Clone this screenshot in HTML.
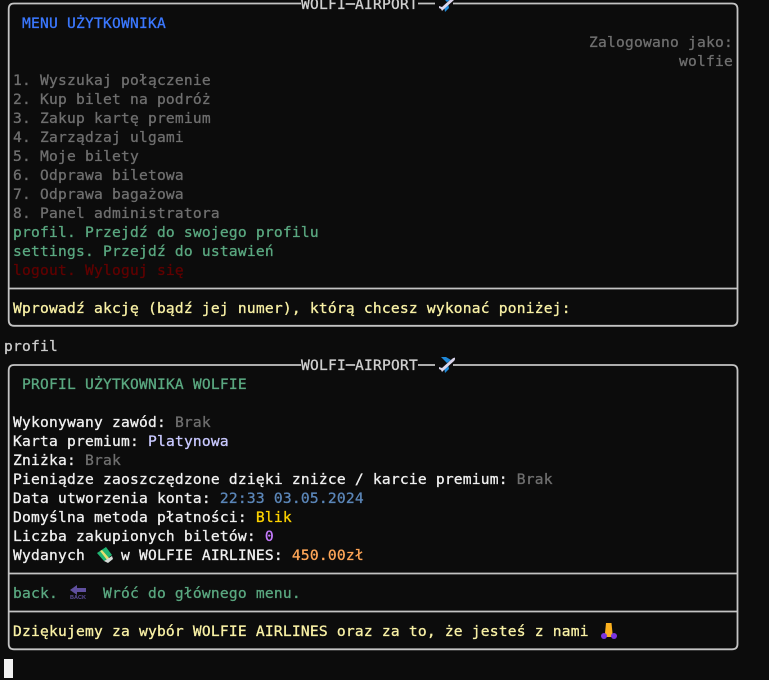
<!DOCTYPE html>
<html lang="pl"><head><meta charset="utf-8"><title>Wolfi Airport</title>
<style>
html,body{margin:0;padding:0;background:#0c0c0c;width:769px;height:680px;overflow:hidden}
.r{position:absolute;left:4px;height:19px;line-height:19px;margin-top:1px;white-space:pre;font-family:"DejaVu Sans Mono","Liberation Mono",monospace;font-size:14.6px;letter-spacing:.21px;color:#f0f0f0;-webkit-text-stroke:.3px currentColor}
.gr{color:#6f6f6f}.g{color:#5aa880}.y{color:#f9f1a5}.rd{color:#600000}.b{color:#3b78ff}
.t{color:#d0d0d0}
svg{position:absolute;left:0;top:0}
#cur{position:absolute;left:4px;top:659px;width:9px;height:19px;background:#f2f2f2}
</style></head><body>
<svg width="769" height="680" viewBox="0 0 769 680" fill="none" stroke="#c4c4c4" stroke-width="1.8">
<path d="M301 3.500H14Q8.700 3.500 8.700 9V320Q8.700 325.800 14 325.800H732Q737.500 325.800 737.500 320V9Q737.500 3.500 732 3.500H453M418 3.500H435"/>
<path d="M9 288.500H737"/>
<path d="M301 365H14Q8.700 365 8.700 370.500V644Q8.700 649.300 14 649.300H732Q737.500 649.300 737.500 644V370.500Q737.500 365 732 365H453M418 365H435"/>
<path d="M9 573.500H737M9 611.500H737"/>
<g stroke="none">
<path fill="#1e88d8" d="M441 357h5l5 3-4 3zM444 367l4-3 1 5-4 4z"/>
<path fill="#dcd6ec" d="M439 367l3 1 10-9c1-1 3-2 3-1s0 2-1 3l-10 9-2 2-1-2-2-1z"/>
</g>
<g stroke="none" transform="translate(0 -361)">
<path fill="#1e88d8" d="M441 357h5l5 3-4 3zM444 367l4-3 1 5-4 4z"/>
<path fill="#dcd6ec" d="M439 367l3 1 10-9c1-1 3-2 3-1s0 2-1 3l-10 9-2 2-1-2-2-1z"/>
</g>
<g stroke="none">
<path fill="#21b573" d="M97 553l9-6 6 8-8 6z"/>
<path fill="#e8e070" d="M100 551l2-1 7 8-2 2z"/>
<path fill="#d5dcd8" d="M104 561l8-5 1 3-5 4z"/>
<path fill="#5f4f9e" d="M70 590l7-5v3h9v4h-9v3z"/>
<path fill="#fbb01e" d="M606 623h5.500l1 10-1 4h-5.500l-1-4z"/>
<circle cx="604" cy="636" r="3" fill="#7a35e0"/>
<circle cx="614" cy="636" r="3" fill="#7a35e0"/>
</g>
</svg>
<div class="r t" style="left:301px;top:355px">WOLFI─AIRPORT</div>
<div class="r t" style="left:301px;top:-6px">WOLFI─AIRPORT</div>
<div class="r b" style="left:22px;top:13px">MENU UŻYTKOWNIKA</div>
<div class="r gr" style="left:589px;top:32px">Zalogowano jako:</div>
<div class="r gr" style="left:679px;top:51px">wolfie</div>
<div class="r gr" style="left:13px;top:70px">1. Wyszukaj połączenie</div>
<div class="r gr" style="left:13px;top:89px">2. Kup bilet na podróż</div>
<div class="r gr" style="left:13px;top:108px">3. Zakup kartę premium</div>
<div class="r gr" style="left:13px;top:127px">4. Zarządzaj ulgami</div>
<div class="r gr" style="left:13px;top:146px">5. Moje bilety</div>
<div class="r gr" style="left:13px;top:165px">6. Odprawa biletowa</div>
<div class="r gr" style="left:13px;top:184px">7. Odprawa bagażowa</div>
<div class="r gr" style="left:13px;top:203px">8. Panel administratora</div>
<div class="r g" style="left:13px;top:222px">profil. Przejdź do swojego profilu</div>
<div class="r g" style="left:13px;top:241px">settings. Przejdź do ustawień</div>
<div class="r rd" style="left:13px;top:260px">logout. Wyloguj się</div>
<div class="r y" style="left:13px;top:298px">Wprowadź akcję (bądź jej numer), którą chcesz wykonać poniżej:</div>
<div class="r" style="left:4px;top:336px;color:#cccccc">profil</div>
<div class="r g" style="left:22px;top:374px">PROFIL UŻYTKOWNIKA WOLFIE</div>
<div class="r" style="left:13px;top:412px">Wykonywany zawód: <span class="gr">Brak</span></div>
<div class="r" style="left:13px;top:431px">Karta premium: <span style="color:#c9c9ff">Platynowa</span></div>
<div class="r" style="left:13px;top:450px">Zniżka: <span class="gr">Brak</span></div>
<div class="r" style="left:13px;top:469px">Pieniądze zaoszczędzone dzięki zniżce / karcie premium: <span class="gr">Brak</span></div>
<div class="r" style="left:13px;top:488px">Data utworzenia konta: <span style="color:#5b86b8">22:33 03.05.2024</span></div>
<div class="r" style="left:13px;top:507px">Domyślna metoda płatności: <span style="color:#ffd400">Blik</span></div>
<div class="r" style="left:13px;top:526px">Liczba zakupionych biletów: <span style="color:#c77dff">0</span></div>
<div class="r" style="left:13px;top:545px">Wydanych    w WOLFIE AIRLINES: <span style="color:#ffa657">450.00zł</span></div>
<div class="r g" style="left:13px;top:583px">back.     Wróć do głównego menu.</div>
<div class="r y" style="left:13px;top:621px">Dziękujemy za wybór WOLFIE AIRLINES oraz za to, że jesteś z nami</div>
<div id="cur"></div>
<div style="position:absolute;left:70px;top:595px;width:16px;height:6px;font:bold 5.500px/6px 'Liberation Sans',sans-serif;color:#5f4f9e;text-align:center">BACK</div>
</body></html>
